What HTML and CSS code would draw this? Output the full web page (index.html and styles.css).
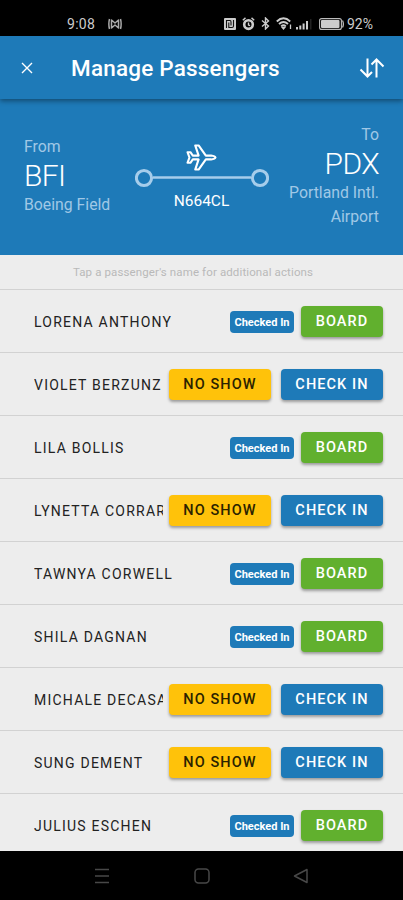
FILE: index.html
```
<!DOCTYPE html>
<html lang="en">
<head>
<meta charset="utf-8">
<title>Manage Passengers</title>
<link rel="stylesheet" href="styles.css">
</head>
<body>
<div class="status">
  <span class="time">9:08</span>
  <svg class="motion" width="14" height="12" viewBox="0 0 14 12" fill="none" stroke="#aaa" stroke-width="1.5" stroke-linejoin="round"><path d="M1.500 1Q.2 6 1.500 11M12.500 1q1.300 5 0 10M3.500 2v8l3.500-3 3.500 3V2L7 5z"/></svg>
  <div class="icons">
    <svg width="12" height="12" viewBox="0 0 12 12"><rect width="12" height="12" rx="1" fill="#ccc"/><path d="M2.500 10V2.500H6Q7 2.500 7 4V7.500M4.800 4.500V9.500H8Q9.500 9.500 9.500 8V2" fill="none" stroke="#111" stroke-width="1.100"/></svg>
    <svg width="13" height="14" viewBox="0 0 12 13" fill="none" stroke="#ccc"><circle cx="6" cy="7" r="4" stroke-width="2.400"/><path d="M.7 3 3.200.8M11.300 3 8.800.8M6 5v2.500l1.500.5" stroke-width="1.300"/></svg>
    <svg width="9" height="13" viewBox="0 0 9 13" fill="none" stroke="#ccc" stroke-width="1.400"><path d="M1 3.500 7.500 9 4.500 12V1l3 3L1 9.500"/></svg>
    <svg class="wifi" width="17" height="13" viewBox="0 0 17 13" fill="none" stroke="#ccc" stroke-width="1.900"><path d="M.8 4.500Q7.500-1.800 14.200 4.500M3 7Q7.500 2.800 12 7M5.200 9.400Q7.500 7.200 9.800 9.400"/><path d="M6.200 10.500h2.600L7.500 12zM14.500 12V7.500" stroke-width="1.300"/></svg>
    <svg class="signal" width="16" height="12" viewBox="0 0 16 12" fill="#ccc"><path d="M0 9h2v2.500H0zM3.300 7.500h2v4h-2zM6.600 5.500h2v6h-2zM10 3h2v8.500h-2z"/><path d="M14 1h1.500v10.500H14z" fill="#222"/></svg>
    <svg class="battery" width="26" height="12" viewBox="0 0 26 12"><rect x=".6" y=".6" width="21.800" height="10.800" rx="2" fill="none" stroke="#bbb" stroke-width="1.100"/><rect x="2" y="2" width="18.500" height="8" rx="1" fill="#ccc"/><path d="M23.500 2.500q1.800 3.500 0 7" fill="none" stroke="#bbb" stroke-width="1.300"/></svg>
    <span class="percent">92%</span>
  </div>
</div>
<header class="toolbar">
  <svg width="12" height="12" viewBox="0 0 12 12" stroke="#fff" stroke-width="1.400"><path d="M1 1l10 10M11 1 1 11"/></svg>
  <h1>Manage Passengers</h1>
  <svg class="swap" width="26" height="20" viewBox="0 0 26 20" fill="none" stroke="#fff" stroke-width="2"><path d="M8.500.5V18M1.500 11.500 8.500 18.500 13 14M17.500 19.500V2M12.500 6.500 17.500 1.500 24.500 8.500"/></svg>
</header>
<section class="flight">
  <div class="place from"><span>From</span><strong>BFI</strong><span>Boeing Field</span></div>
  <div class="route">
    <svg class="plane" width="31" height="27" viewBox="0 0 32 28" fill="none" stroke="#fff" stroke-width="2.200" stroke-linejoin="round"><path d="M1.500 8.500h3l2.500 3.500H13L9.500 1.500h3.500L20.500 12H26q4 .5 4.500 2-.5 1.500-4.500 2h-5.500L13 26.500H9.500L13 16H7l-2.500 3.500h-3L3.500 14z"/></svg>
    <svg width="134" height="20" viewBox="0 0 134 20" fill="none" stroke="#a6cdeb"><path d="M18 9.500h98" stroke-width="2.500"/><circle cx="9" cy="10" r="7.600" stroke-width="3"/><circle cx="125" cy="10" r="7.600" stroke-width="3"/></svg>
    <span class="tail">N664CL</span>
  </div>
  <div class="place to"><span>To</span><strong>PDX</strong><span>Portland Intl.</span><span>Airport</span></div>
</section>
<p class="hint">Tap a passenger's name for additional actions</p>
<ul class="list">
  <li><span class="name">LORENA ANTHONY</span><span class="badge">Checked In</span><button class="board">BOARD</button></li>
  <li><span class="name">VIOLET BERZUNZ</span><button class="noshow">NO SHOW</button><button class="checkin">CHECK IN</button></li>
  <li><span class="name">LILA BOLLIS</span><span class="badge">Checked In</span><button class="board">BOARD</button></li>
  <li><span class="name">LYNETTA CORRAR</span><button class="noshow">NO SHOW</button><button class="checkin">CHECK IN</button></li>
  <li><span class="name">TAWNYA CORWELL</span><span class="badge">Checked In</span><button class="board">BOARD</button></li>
  <li><span class="name">SHILA DAGNAN</span><span class="badge">Checked In</span><button class="board">BOARD</button></li>
  <li><span class="name">MICHALE DECASA</span><button class="noshow">NO SHOW</button><button class="checkin">CHECK IN</button></li>
  <li><span class="name">SUNG DEMENT</span><button class="noshow">NO SHOW</button><button class="checkin">CHECK IN</button></li>
  <li><span class="name">JULIUS ESCHEN</span><span class="badge">Checked In</span><button class="board">BOARD</button></li>
</ul>
<nav class="nav">
  <svg width="16" height="16" viewBox="0 0 16 16" stroke="#484848" stroke-width="1.500"><path d="M1 1.500h14M1 8h14M1 14.500h14"/></svg>
  <svg width="16" height="16" viewBox="0 0 16 16" fill="none" stroke="#484848" stroke-width="1.500"><rect x="1" y="1" width="14" height="14" rx="3.500"/></svg>
  <svg width="16" height="16" viewBox="0 0 16 16" fill="none" stroke="#484848" stroke-width="1.500" stroke-linejoin="round"><path d="M14 1.500v13L1.500 8z"/></svg>
</nav>
</body>
</html>
```
FILE: styles.css
```
* { box-sizing: border-box; }
body { margin: 0; width: 403px; height: 900px; overflow: hidden; display: flex; flex-direction: column; background: #ededed; font-family: Roboto, sans-serif; }
svg { display: block; flex: none; }
.status { height: 36px; flex: none; background: #000; color: #ccc; display: flex; align-items: center; padding: 11px 29px 0 67px; font-size: 14px; }
.time { width: 41px; letter-spacing: .3px; }
.icons { margin-left: auto; display: flex; align-items: center; }
.icons svg { margin-right: 6px; }
.icons .wifi { margin-right: 3px; }
.icons .signal { margin-right: 7px; }
.icons .battery { margin-right: 2px; }
.percent { width: 27px; font-size: 14px; white-space: nowrap; }
.toolbar { height: 63px; flex: none; background: #1e7ab8; display: flex; align-items: center; padding: 0 18px 0 21px; box-shadow: 0 2px 5px rgba(0,0,0,.4); z-index: 1; }
h1 { margin: 0 auto 0 38px; color: #fff; font-size: 22.500px; font-weight: 500; letter-spacing: .2px; white-space: nowrap; }
.flight { height: 156px; flex: none; background: #1e7ab8; display: flex; justify-content: space-between; padding: 24px 24px 0; }
.place { color: #a0c8e6; font-size: 15.800px; line-height: 24px; display: flex; flex-direction: column; width: 111px; white-space: nowrap; }
.place strong { font-size: 30px; line-height: 34px; font-weight: 300; color: #fff; letter-spacing: -.6px; }
.from { padding-top: 12px; }
.to { text-align: right; }
.route { display: flex; flex-direction: column; align-items: center; padding-top: 21px; }
.plane { margin-bottom: -3px; }
.tail { color: #fff; font-size: 15.500px; line-height: 20px; margin-top: 3px; }
.hint { margin: 0; height: 34px; flex: none; font-size: 11.500px; line-height: 34px; text-align: center; color: #b9b9b9; letter-spacing: .12px; padding-right: 17px; }
.list { margin: 0; padding: 0; list-style: none; height: 562px; overflow: hidden; }
.list li { height: 63px; border-top: 1px solid #d2d2d2; display: flex; align-items: center; padding: 1px 20px 0 34px; }
.name { flex: 1; min-width: 0; margin-right: 6px; overflow: hidden; white-space: nowrap; font-size: 14px; letter-spacing: 1.220px; color: #222; }
.badge { width: 64px; height: 22px; margin-right: 7px; border-radius: 4px; background: #1e7ab8; color: #fff; font-size: 11px; font-weight: 700; line-height: 23px; text-align: center; white-space: nowrap; }
button { height: 31px; padding: 0; border: 0; border-radius: 4px; font: 500 14.500px/31px Roboto, sans-serif; letter-spacing: 1.100px; color: #fff; box-shadow: 0 2px 3px rgba(0,0,0,.35); }
.board { width: 82px; background: #61b02e; }
.checkin { width: 102px; background: #1e7ab8; }
.noshow { width: 102px; margin-right: 10px; background: #ffc20a; color: #2b2200; }
.nav { flex: 1; background: #000; display: flex; align-items: center; justify-content: space-between; padding: 0 94px; }
```
